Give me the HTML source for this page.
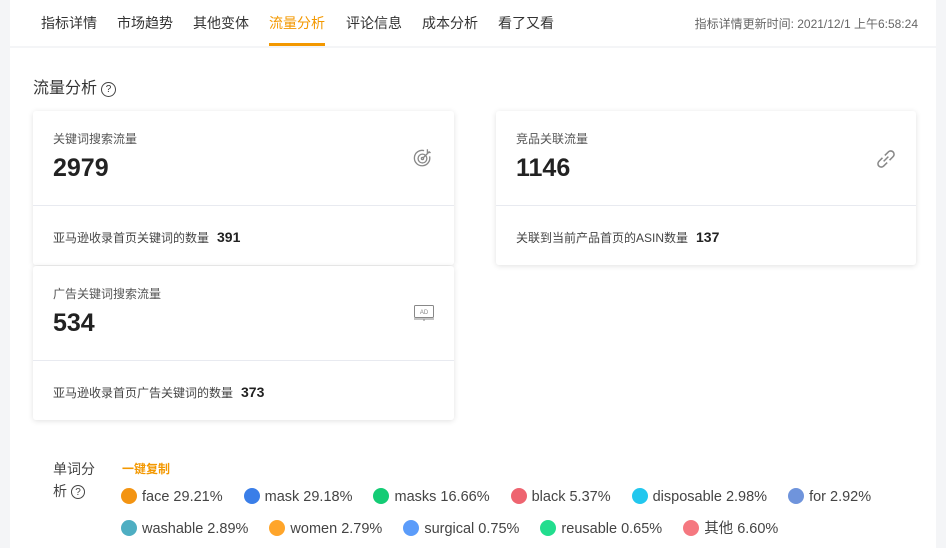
<!DOCTYPE html>
<html><head><meta charset="utf-8"><style>
*{margin:0;padding:0;box-sizing:border-box}
body{width:946px;height:544px;overflow:hidden;background:#f4f5f7;font-family:"Liberation Sans","Noto Sans CJK SC",sans-serif;color:#333;position:relative}
.nav{position:absolute;left:10px;top:0;width:926px;height:46px;background:#fff}
.nav span{position:absolute;top:13px;font-size:14px;color:#333}
.nav .act{color:#f39800}
.nav .bar{position:absolute;left:259px;top:43px;width:56px;height:3px;background:#f39800}
.upd{position:absolute;right:18px;top:15px;font-size:12px;color:#666}
.main{position:absolute;left:10px;top:48px;width:926px;height:500px;background:#fff}
.title{position:absolute;left:33px;top:74px;font-size:16px;color:#333}
.q{display:inline-block;width:15px;height:15px;border:1.2px solid #444;border-radius:50%;font-size:10px;line-height:13px;text-align:center;vertical-align:1px;margin-left:4px}
.card{position:absolute;background:#fff;border-radius:3px;box-shadow:0 1px 6px rgba(0,0,0,.12)}
.card .lb{position:absolute;left:20px;top:19px;font-size:12px;color:#555}
.card .num{position:absolute;left:20px;top:43px;font-size:25px;color:#222;font-weight:bold}
.card .dv{position:absolute;left:0;right:0;top:94px;border-top:1px solid #e8eaf0}
.card .ft{position:absolute;left:20px;top:118px;font-size:12px;color:#444}
.card .ft b{font-size:14px;color:#222;margin-left:8px}
.card svg{position:absolute}
.sw{position:absolute;left:53px;top:458px;font-size:14px;color:#444;line-height:22px;width:50px}
.copy{position:absolute;left:122px;top:460px;font-size:12px;color:#f39800;font-weight:bold}
.leg{position:absolute;left:121px;font-size:14.5px;color:#444;white-space:nowrap}
.leg i{display:inline-block;width:16px;height:16px;border-radius:50%;vertical-align:-3px;margin-right:5px}
.leg span{margin-right:21px}
</style></head><body>
<div class="nav">
<span style="left:31px">指标详情</span><span style="left:107px">市场趋势</span><span style="left:183px">其他变体</span><span class="act" style="left:259px">流量分析</span><span style="left:336px">评论信息</span><span style="left:412px">成本分析</span><span style="left:488px">看了又看</span>
<div class="bar"></div>
<div class="upd">指标详情更新时间: 2021/12/1 上午6:58:24</div>
</div>
<div class="main"></div>
<div class="title">流量分析<span class="q">?</span></div>
<div class="card" style="left:33px;top:111px;width:421px;height:154px">
<div class="lb">关键词搜索流量</div><div class="num">2979</div>
<svg style="left:379px;top:36px" width="22" height="22" viewBox="0 0 20 20" fill="none" stroke="#888" stroke-width="1.2"><path d="M16 8.5A7 7 0 1 1 11 3.3"/><circle cx="9.5" cy="10.5" r="4"/><circle cx="9.5" cy="10.5" r="1"/><path d="M10 10L16 4M14 2v3h3"/></svg>
<div class="dv"></div><div class="ft">亚马逊收录首页关键词的数量<b>391</b></div></div>
<div class="card" style="left:496px;top:111px;width:420px;height:154px">
<div class="lb">竞品关联流量</div><div class="num">1146</div>
<svg style="left:377px;top:35px" width="26" height="26" viewBox="0 0 22 22" fill="none" stroke="#888" stroke-width="1.3"><path d="M9 13l4-4M8 10l-3 3a2.5 2.5 0 0 0 4 4l3-3M14 12l3-3a2.5 2.5 0 0 0-4-4l-3 3"/></svg>
<div class="dv"></div><div class="ft">关联到当前产品首页的ASIN数量<b>137</b></div></div>
<div class="card" style="left:33px;top:266px;width:421px;height:154px">
<div class="lb">广告关键词搜索流量</div><div class="num">534</div>
<svg style="left:380px;top:38px" width="22" height="18" viewBox="0 0 22 18" fill="none" stroke="#888" stroke-width="1"><rect x="1.5" y="1.5" width="19" height="12" rx="1"/><path d="M1 15h20M11 15v2"/><text x="11" y="10" font-size="6" fill="#888" stroke="none" text-anchor="middle" font-family="Liberation Sans">AD</text></svg>
<div class="dv"></div><div class="ft">亚马逊收录首页广告关键词的数量<b>373</b></div></div>
<div class="sw">单词分析<span class="q" style="width:14px;height:14px">?</span></div>
<div class="copy">一键复制</div>
<div class="leg" style="top:488px"><span><i style="background:#f39412"></i>face 29.21%</span><span><i style="background:#3a7ee8"></i>mask 29.18%</span><span><i style="background:#14cc75"></i>masks 16.66%</span><span><i style="background:#ee6470"></i>black 5.37%</span><span><i style="background:#22c7ee"></i>disposable 2.98%</span><span><i style="background:#6f94dc"></i>for 2.92%</span></div>
<div class="leg" style="top:517px"><span><i style="background:#4eaec2"></i>washable 2.89%</span><span><i style="background:#ffa52a"></i>women 2.79%</span><span><i style="background:#5b9cfa"></i>surgical 0.75%</span><span><i style="background:#22dd8e"></i>reusable 0.65%</span><span><i style="background:#f57880"></i>其他 6.60%</span></div>
</body></html>
